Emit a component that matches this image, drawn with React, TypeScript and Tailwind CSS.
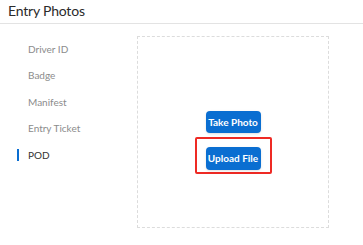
const items = ["Driver ID", "Badge", "Manifest", "Entry Ticket", "POD"];

export default function App() {
  const active = "POD";

  return (
    <div className="w-[363px] h-[245px] bg-white overflow-hidden font-['Lato','Open_Sans',sans-serif]">
      <div className="h-[24px] border-b border-[#e3e3e3] px-[8px] flex items-center">
        <h1 className="text-[14px] leading-none text-[#2b2b2b] tracking-[-0.2px] pb-[2px]">Entry Photos</h1>
      </div>

      <div className="flex pt-[12px]">
        <ul className="w-[137px] shrink-0">
          {items.map((item) => (
            <li key={item} className="h-[26.5px] flex items-center text-[10px]">
              <span
                className={
                  "w-[2px] h-[12px] ml-[17px] mr-[9px] " +
                  (item === active ? "bg-[#0a6ed1]" : "bg-transparent")
                }
              />
              <span className={item === active ? "text-[#333333]" : "text-[#8c8c8c]"}>
                {item}
              </span>
            </li>
          ))}
        </ul>

        <div className="w-[192px] h-[192px] border border-dashed border-[#dcdcdc] flex flex-col items-center pt-[74px]">
          <button className="w-[55px] h-[22px] rounded-[4px] bg-[#0a6ed1] text-white text-[10px] font-bold shadow-sm">
            Take Photo
          </button>
          <div className="mt-[4px] border-2 border-[#ee2a24] rounded-[2px] px-[9px] pt-[5px] pb-[2px]">
            <button className="w-[55px] h-[23px] rounded-[4px] bg-[#0a6ed1] text-white text-[10px] font-bold shadow-sm whitespace-nowrap">
              Upload File
            </button>
          </div>
        </div>
      </div>
    </div>
  );
}
